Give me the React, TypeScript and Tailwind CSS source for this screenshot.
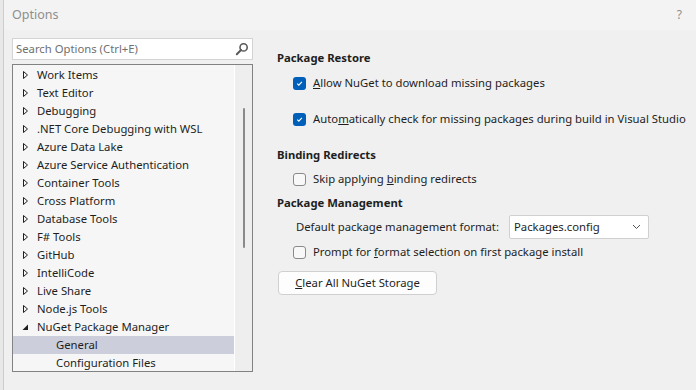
import React from 'react';

const font = { fontFamily: '"Noto Sans", "Liberation Sans", sans-serif' };

function Closed() {
  return (
    <svg width="7" height="10" viewBox="0 0 7 10" className="shrink-0">
      <polygon points="1.5,1.5 5.5,5 1.5,8.5" fill="none" stroke="#1e1e1e" strokeWidth="1" />
    </svg>
  );
}

function Open() {
  return (
    <svg width="7" height="10" viewBox="0 0 7 10" className="shrink-0">
      <polygon points="6,2.5 6,8 0.5,8" fill="#1e1e1e" />
    </svg>
  );
}

function Check({ on }: { on?: boolean }) {
  if (on) {
    return (
      <span className="flex h-[13px] w-[13px] shrink-0 items-center justify-center rounded-[3px] bg-[#005fb8]">
        <svg width="9" height="9" viewBox="0 0 9 9">
          <path d="M2.2 4.7 L3.8 6.2 L6.9 2.9" fill="none" stroke="#fff" strokeWidth="1.1" />
        </svg>
      </span>
    );
  }
  return <span className="h-[13px] w-[13px] shrink-0 rounded-[3px] border border-[#8a8a8a] bg-[#f8f8f8]" />;
}

const items = [
  'Work Items',
  'Text Editor',
  'Debugging',
  '.NET Core Debugging with WSL',
  'Azure Data Lake',
  'Azure Service Authentication',
  'Container Tools',
  'Cross Platform',
  'Database Tools',
  'F# Tools',
  'GitHub',
  'IntelliCode',
  'Live Share',
  'Node.js Tools',
];

export default function App() {
  return (
    <div className="flex h-[390px] w-[696px] overflow-hidden whitespace-nowrap bg-[#f0f0f0] text-[11.3px] text-[#1e1e1e]" style={font}>
      <div className="w-[4px] shrink-0 border-r border-[#cdcdcd] bg-[#e8e8e8]" />
      <div className="flex flex-1 flex-col">
        <div className="flex h-[30px] items-center justify-between bg-[#f3f3f3] pl-[8px] pr-[14px]">
          <span className="text-[12.5px] text-[#8e8e8e]">Options</span>
          <span className="text-[12px] text-[#8e8e8e]">?</span>
        </div>
        <div className="flex">
          <div className="ml-[8px] mt-[8px] w-[241px] shrink-0">
            <div className="flex h-[22px] items-center justify-between border border-[#d4d4d4] bg-white pl-[3px] pr-[3px]">
              <span className="text-[#707070]">Search Options (Ctrl+E)</span>
              <svg width="14" height="14" viewBox="0 0 14 14">
                <circle cx="8.6" cy="5.4" r="3.6" fill="none" stroke="#5a5a5a" strokeWidth="1.6" />
                <line x1="6" y1="8" x2="1.8" y2="12.2" stroke="#5a5a5a" strokeWidth="2" strokeLinecap="round" />
              </svg>
            </div>
            <div className="mt-[4px] flex h-[308px] border border-[#828282] bg-[#f6f6f6]">
              <div className="flex flex-1 flex-col overflow-hidden pt-[1px]">
                {items.map((t) => (
                  <div key={t} className="flex h-[18px] shrink-0 items-center gap-[8px] pl-[9px]">
                    <Closed />
                    <span className="leading-[18px]">{t}</span>
                  </div>
                ))}
                <div className="flex h-[18px] shrink-0 items-center gap-[8px] pl-[9px]">
                  <Open />
                  <span className="leading-[18px]">NuGet Package Manager</span>
                </div>
                <div className="flex h-[18px] shrink-0 items-center bg-[#cccedb] pl-[43px]">General</div>
                <div className="flex h-[18px] shrink-0 items-center pl-[43px]">Configuration Files</div>
              </div>
              <div className="flex w-[18px] shrink-0 justify-center border-l border-white bg-[#eeeeee]">
                <div className="mt-[43px] h-[140px] w-[2px] rounded-full bg-[#8a8a8a]" />
              </div>
            </div>
          </div>

          <div className="ml-[24px] flex flex-col pt-[19px]">
            <div className="h-[18px] font-bold leading-[18px]">Package Restore</div>
            <div className="ml-[16px] mt-[6px] flex h-[20px] items-center gap-[7px]">
              <Check on />
              <span><u>A</u>llow NuGet to download missing packages</span>
            </div>
            <div className="ml-[16px] mt-[16px] flex h-[20px] items-center gap-[7px]">
              <Check on />
              <span>Auto<u>m</u>atically check for missing packages during build in Visual Studio</span>
            </div>
            <div className="mt-[17px] h-[18px] font-bold leading-[18px]">Binding Redirects</div>
            <div className="ml-[16px] mt-[5px] flex h-[20px] items-center gap-[7px]">
              <Check />
              <span>Skip applying <u>b</u>inding redirects</span>
            </div>
            <div className="mt-[5px] h-[18px] font-bold leading-[18px]">Package Management</div>
            <div className="ml-[19px] mt-[3px] flex h-[24px] items-center">
              <span className="w-[213px] shrink-0">Default package management format:</span>
              <div className="flex h-[24px] w-[140px] shrink-0 items-center justify-between rounded-[2px] border border-[#d0d0d0] bg-white pl-[4px] pr-[7px]">
                <span>Packages.config</span>
                <svg width="9" height="6" viewBox="0 0 9 6">
                  <path d="M1 1 L4.5 4.5 L8 1" fill="none" stroke="#555" strokeWidth="1" />
                </svg>
              </div>
            </div>
            <div className="ml-[16px] mt-[3px] flex h-[20px] items-center gap-[7px]">
              <Check />
              <span>Prompt for <u>f</u>ormat selection on first package install</span>
            </div>
            <button className="ml-[1px] mt-[9px] flex h-[24px] w-[159px] items-center justify-center rounded-[4px] border border-[#d0d0d0] bg-[#fdfdfd] text-[11.3px] text-[#1e1e1e]">
              <span><u>C</u>lear All NuGet Storage</span>
            </button>
          </div>
        </div>
      </div>
    </div>
  );
}
